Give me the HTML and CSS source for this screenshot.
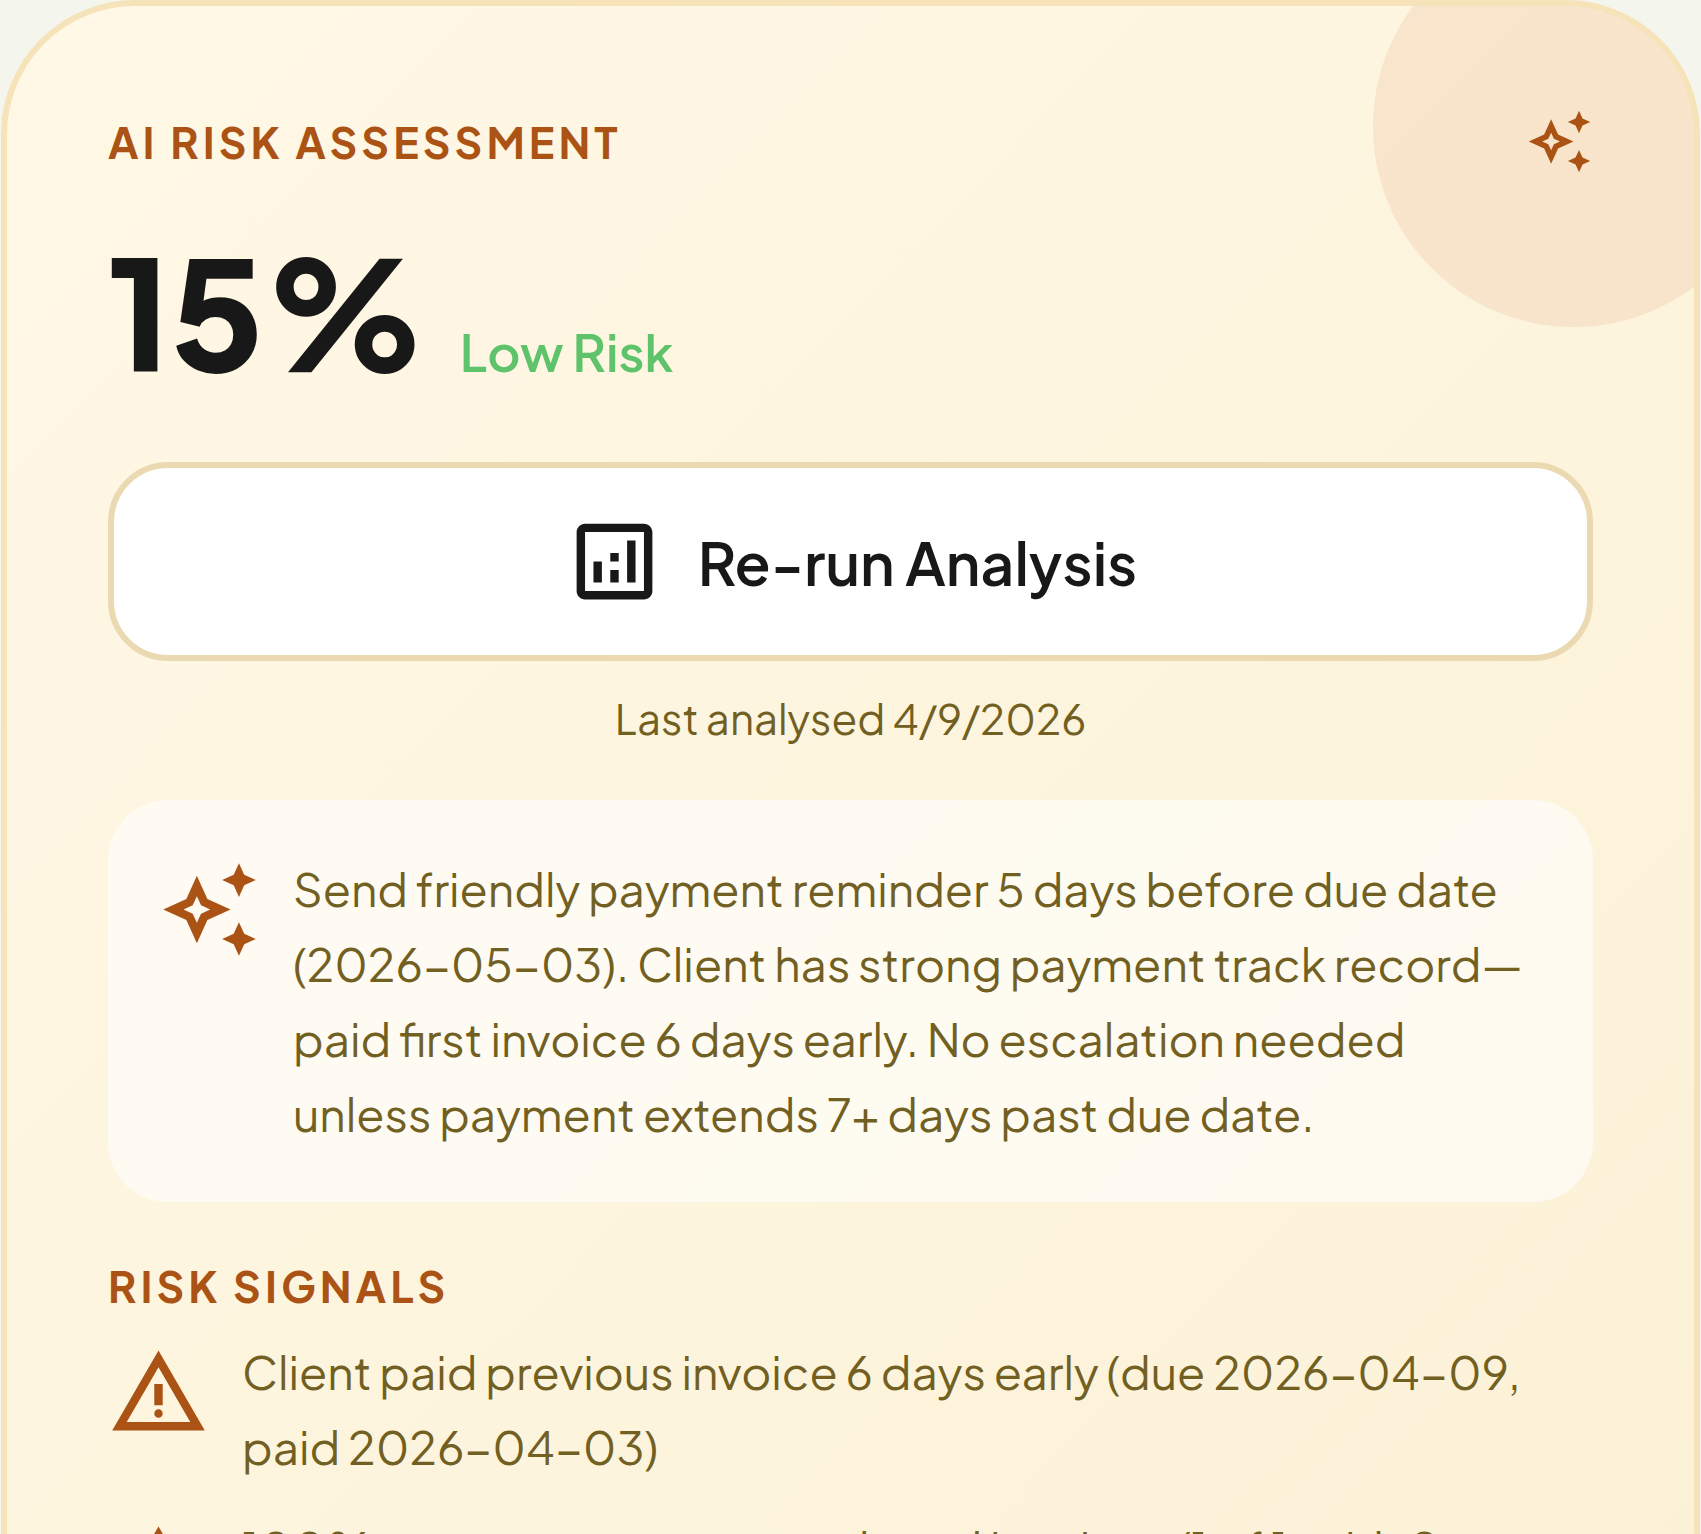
FILE: index.html
```html
<!DOCTYPE html>
<html lang="en">
<head>
<meta charset="utf-8">
<meta name="viewport" content="width=device-width, initial-scale=1">
<title>AI Risk Assessment</title>
<link rel="stylesheet" href="styles.css">
</head>
<body>
<svg class="sprite" aria-hidden="true">
  <symbol id="sparkle" viewBox="0 0 24 24"><path d="M19 9l1.250-2.750L23 5l-2.750-1.250L19 1l-1.250 2.750L15 5l2.750 1.250L19 9zm0 6l-1.250 2.750L15 19l2.750 1.250L19 23l1.250-2.750L23 19l-2.750-1.250L19 15zm-7.500-5.500L9 4 6.500 9.500 1 12l5.500 2.500L9 20l2.500-5.500L17 12l-5.500-2.500zm-1.510 3.490L9 15.170l-.99-2.180L5.830 12l2.180-.99L9 8.830l.99 2.180 2.180.99-2.180.99z"/></symbol>
  <symbol id="analytics" viewBox="0 0 24 24"><path d="M19 3H5c-1.100 0-2 .9-2 2v14c0 1.100.9 2 2 2h14c1.100 0 2-.9 2-2V5c0-1.100-.9-2-2-2zm0 16H5V5h14v14zM7 12h2v5H7zM15 7h2v10h-2zM11 14h2v3h-2zM11 10h2v2h-2z"/></symbol>
  <symbol id="warning" viewBox="0 -960 960 960"><path d="m40-120 440-760 440 760H40Zm138-80h604L480-720 178-200Zm302-40q17 0 28.500-11.500T520-280q0-17-11.500-28.500T480-320q-17 0-28.500 11.500T440-280q0 17 11.500 28.500T480-240Zm-40-120h80v-200h-80v200Z"/></symbol>
</svg>
<main class="card">
  <header class="card-header">
    <h1 class="label">AI Risk Assessment</h1>
    <svg class="icon icon-small" aria-hidden="true"><use href="#sparkle"/></svg>
  </header>
  <p class="score"><strong class="score-value">15%</strong><span class="score-level">Low Risk</span></p>
  <button class="rerun" type="button">
    <svg class="icon" aria-hidden="true"><use href="#analytics"/></svg>
    Re-run Analysis
  </button>
  <p class="updated">Last analysed 4/9/2026</p>
  <section class="advice">
    <svg class="icon icon-lead" aria-hidden="true"><use href="#sparkle"/></svg>
    <p class="text">Send friendly payment reminder 5 days before due date (2026-05-03). Client has strong payment track record—paid first invoice 6 days early. No escalation needed unless payment extends 7+ days past due date.</p>
  </section>
  <h2 class="label">Risk Signals</h2>
  <ul class="signals">
    <li class="signal">
      <svg class="icon icon-lead" aria-hidden="true"><use href="#warning"/></svg>
      <p class="text">Client paid previous invoice 6 days early (due 2026-04-09, paid 2026-04-03)</p>
    </li>
    <li class="signal">
      <svg class="icon icon-lead" aria-hidden="true"><use href="#warning"/></svg>
      <p class="text">100% payment rate across closed invoices (1 of 1, with 0 overdue amounts)</p>
    </li>
  </ul>
</main>
</body>
</html>
```

FILE: styles.css
```css
* { box-sizing: border-box; }

html { overflow: hidden; }

body {
  margin: 0;
  height: 100vh;
  overflow: hidden;
  background: #f4f6ee;
  color: #725f22;
  font-family: "Plus Jakarta Sans", Inter, "Open Sans", sans-serif;
}

h1, h2, p, ul { margin: 0; padding: 0; }

.sprite { display: none; }

.card {
  position: relative;
  overflow: hidden;
  margin: 0 1px;
  padding: 102px 101px;
  border: 6px solid #f6e3b9;
  border-radius: 134px;
  background: linear-gradient(135deg, #fff8e6, #fcf1d6);
}

.card::before {
  content: "";
  position: absolute;
  top: -80px;
  right: -80px;
  width: 401px;
  height: 401px;
  border-radius: 50%;
  background: rgba(200, 90, 40, 0.1);
}

.card-header {
  position: relative;
  display: flex;
  align-items: center;
  justify-content: space-between;
}

.label {
  color: #ab5315;
  font-size: 43px;
  font-weight: 700;
  line-height: 56px;
  letter-spacing: 4px;
  text-transform: uppercase;
}

.icon {
  flex: none;
  width: 101px;
  height: 101px;
  fill: currentColor;
}

.icon-small {
  width: 67px;
  height: 67px;
  color: #ab5315;
}

.icon-lead {
  margin-top: 8px;
  color: #ab5315;
}

.score {
  display: flex;
  align-items: baseline;
  gap: 33px;
  margin-top: 45px;
}

.score-value {
  color: #181818;
  font-size: 152px;
  font-weight: 800;
  line-height: 180px;
}

.score-level {
  color: #5fc36b;
  font-size: 51px;
  font-weight: 600;
}

.rerun {
  display: flex;
  align-items: center;
  justify-content: center;
  gap: 33px;
  width: 100%;
  height: 199px;
  margin-top: 62px;
  border: 6px solid #ebd9b2;
  border-radius: 60px;
  background: #fff;
  color: #181818;
  font: inherit;
  font-size: 59px;
  font-weight: 600;
}

.updated {
  margin-top: 29px;
  font-size: 42px;
  line-height: 56px;
  text-align: center;
}

.advice {
  display: flex;
  gap: 33px;
  margin: 54px 0 56px;
  padding: 51px;
  border-radius: 60px;
  background: rgba(255, 255, 255, 0.6);
}

.text {
  font-size: 46px;
  line-height: 75px;
}

.signals {
  display: grid;
  gap: 26px;
  margin-top: 20px;
  list-style: none;
}

.signal {
  display: flex;
  gap: 33px;
}
```
